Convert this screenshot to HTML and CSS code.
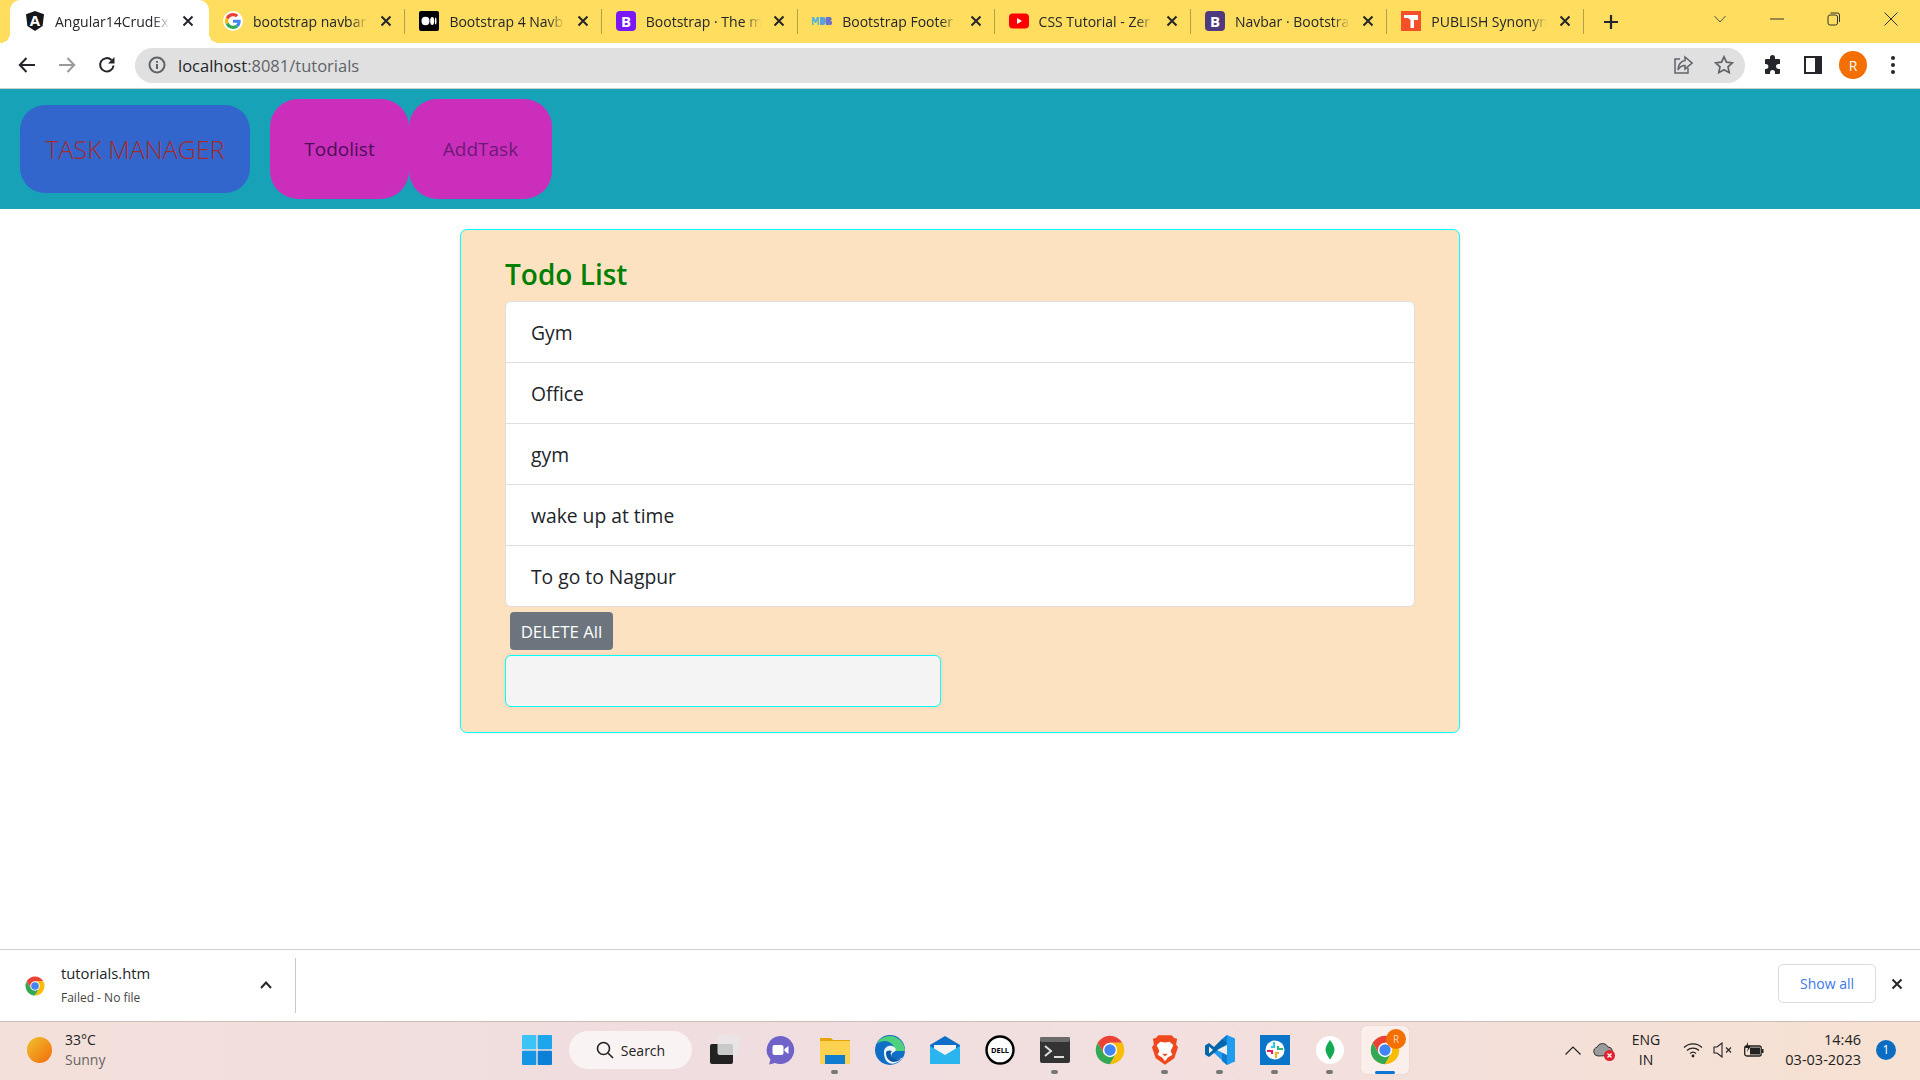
FILE: index.html
```html
<!DOCTYPE html>
<html lang="en">
<head>
    <meta charset="UTF-8">
    <title>Angular14CrudExample</title>
    <link rel="stylesheet" href="styles.css">
</head>
<body>
    <svg class="defs" width="0" height="0">
        <symbol id="chrome" viewBox="3 3 42 42">
            <path fill="#ea4335" d="M41.32 14A20 20 0 0 0 6.68 14L15.34 29 24 24V14Z"/>
            <path fill="#34a853" d="M6.68 14A20 20 0 0 0 24 44L32.66 29 24 24 15.34 29Z"/>
            <path fill="#fbbc05" d="M24 44A20 20 0 0 0 41.32 14H24V24L32.66 29Z"/>
            <circle cx="24" cy="24" r="10" fill="#fff"/>
            <circle cx="24" cy="24" r="8" fill="#4285f4"/>
        </symbol>
        <symbol id="close" viewBox="0 0 12 12">
            <path d="M1.5 1.5l9 9M10.5 1.5l-9 9" fill="none" stroke="#24262b" stroke-width="2"/>
        </symbol>
    </svg>

    <div class="tabstrip">
        <div class="tab active">
            <svg class="fav" viewBox="0 0 20 20"><path d="M10 0l9 3.2-1.4 11.9L10 20l-7.6-4.900L1 3.200z" fill="#15171c"/><text x="10" y="15" class="fav-letter">A</text></svg>
            <span class="tab-title">Angular14CrudExa</span>
            <svg class="tab-close"><use href="#close"/></svg>
        </div>
        <div class="tab">
            <svg class="fav" viewBox="-6 -6 60 60"><circle cx="24" cy="24" r="30" fill="#fff"/><path fill="#ea4335" d="M24 9.500c3.540 0 6.710 1.220 9.210 3.600l6.850-6.850C35.900 2.380 30.470 0 24 0 14.620 0 6.510 5.380 2.560 13.220l7.980 6.190C12.430 13.720 17.740 9.500 24 9.500z"/><path fill="#4285f4" d="M46.980 24.550c0-1.570-.15-3.090-.38-4.550H24v9.020h12.940c-.58 2.960-2.260 5.480-4.780 7.180l7.730 6c4.510-4.180 7.090-10.360 7.090-17.650z"/><path fill="#fbbc05" d="M10.530 28.590c-.48-1.450-.76-2.990-.76-4.590s.27-3.140.76-4.590l-7.980-6.190C.92 16.460 0 20.120 0 24c0 3.880.92 7.540 2.560 10.780l7.970-6.190z"/><path fill="#34a853" d="M24 48c6.480 0 11.930-2.130 15.890-5.810l-7.730-6c-2.150 1.450-4.920 2.300-8.160 2.300-6.260 0-11.570-4.220-13.470-9.910l-7.980 6.190C6.510 42.620 14.620 48 24 48z"/></svg>
            <span class="tab-title">bootstrap navbar</span>
            <svg class="tab-close"><use href="#close"/></svg>
        </div>
        <div class="tab">
            <svg class="fav" viewBox="0 0 20 20"><rect width="20" height="20" rx="2" fill="#000"/><ellipse cx="6.500" cy="10" rx="4" ry="4.200" fill="#fff"/><ellipse cx="13.200" cy="10" rx="2" ry="3.900" fill="#fff"/><ellipse cx="16.700" cy="10" rx=".8" ry="3.500" fill="#fff"/></svg>
            <span class="tab-title">Bootstrap 4 Navb</span>
            <svg class="tab-close"><use href="#close"/></svg>
        </div>
        <div class="tab">
            <svg class="fav" viewBox="0 0 20 20"><rect width="20" height="20" rx="4" fill="#7a17f5"/><text x="10" y="15.500" class="fav-letter">B</text></svg>
            <span class="tab-title">Bootstrap · The m</span>
            <svg class="tab-close"><use href="#close"/></svg>
        </div>
        <div class="tab">
            <svg class="fav" viewBox="0 0 20 20"><path d="M0 6h2l1.500 3L5 6h2v8H5.500V9L4 12H3L1.500 9v5H0z" fill="#52b6dc"/><path d="M8 6h3a3 4 0 0 1 0 8H8z" fill="#5e9fd8"/><path d="M14 6h3.500a2 2 0 0 1 1 3.800 2 2 0 0 1-1 4.200H14z" fill="#6d73c4"/></svg>
            <span class="tab-title">Bootstrap Footer</span>
            <svg class="tab-close"><use href="#close"/></svg>
        </div>
        <div class="tab">
            <svg class="fav" viewBox="0 0 20 20"><rect y="2.500" width="20" height="15" rx="4" fill="#f00"/><path d="M8 7l5 3-5 3z" fill="#fff"/></svg>
            <span class="tab-title">CSS Tutorial - Zer</span>
            <svg class="tab-close"><use href="#close"/></svg>
        </div>
        <div class="tab">
            <svg class="fav" viewBox="0 0 20 20"><rect width="20" height="20" rx="4" fill="#4f3a7e"/><text x="10" y="15.500" class="fav-letter">B</text></svg>
            <span class="tab-title">Navbar · Bootstra</span>
            <svg class="tab-close"><use href="#close"/></svg>
        </div>
        <div class="tab">
            <svg class="fav" viewBox="0 0 20 20"><rect width="20" height="20" fill="#f4502a"/><path d="M3 4h14v5h-4v8H9.500V9L7 7H3z" fill="#fff"/></svg>
            <span class="tab-title">PUBLISH Synonyn</span>
            <svg class="tab-close"><use href="#close"/></svg>
        </div>
        <svg class="new-tab" viewBox="0 0 16 16"><path d="M8 1v14M1 8h14" stroke="#24262b" stroke-width="2.200"/></svg>
        <div class="window-btns">
            <svg class="win-chevron" viewBox="0 0 12 8"><path d="M.5 1l5.500 6 5.500-6" fill="none" stroke="#555"/></svg>
            <svg class="win-btn" viewBox="0 0 14 14"><path d="M0 7h14" stroke="#333"/></svg>
            <svg class="win-btn" viewBox="0 0 14 14"><rect x="1" y="3" width="9.500" height="10" rx="2" fill="none" stroke="#333"/><path d="M3.500 1h7a2 2 0 0 1 2 2v7" fill="none" stroke="#333"/></svg>
            <svg class="win-btn" viewBox="0 0 14 14"><path d="M.5.5l13 13M13.500.5l-13 13" stroke="#333"/></svg>
        </div>
    </div>

    <div class="toolbar">
        <span class="tool"><svg viewBox="0 0 18 18" width="18" height="18"><path d="M17 9H2M8.500 2L1.800 9l6.700 7" fill="none" stroke="#24262b" stroke-width="2"/></svg></span>
        <span class="tool"><svg viewBox="0 0 18 18" width="18" height="18"><path d="M1 9h15M9.500 2l6.700 7-6.700 7" fill="none" stroke="#9a9a9a" stroke-width="2"/></svg></span>
        <span class="tool"><svg viewBox="0 0 18 18" width="18" height="18"><path d="M15.500 9.500A6.700 6.700 0 1 1 13.500 4" fill="none" stroke="#24262b" stroke-width="2"/><path d="M16.500 1v6.500H10z" fill="#24262b"/></svg></span>
        <div class="address">
            <svg class="addr-info" viewBox="0 0 18 18"><circle cx="9" cy="9" r="7.500" fill="none" stroke="#5f6368" stroke-width="2"/><path d="M9 8v5M9 5v1.800" stroke="#5f6368" stroke-width="2"/></svg>
            <span class="url">localhost<span class="url-path">:8081/tutorials</span></span>
            <div class="addr-tools">
                <span class="addr-tool"><svg viewBox="0 0 20 20" width="20" height="20"><path d="M7 4H2v14h13v-5" fill="none" stroke="#5f6368" stroke-width="1.500"/><path d="M12 2l7 6-7 6v-3.500C9 10.500 6.500 12 5 15c0-5 3-9 7-9.500z" fill="none" stroke="#5f6368" stroke-width="1.500"/></svg></span>
                <span class="addr-tool"><svg viewBox="0 0 20 20" width="20" height="20"><path d="M10 1.800l2.500 5.400 5.900.7-4.400 4 1.200 5.800-5.200-2.900-5.200 2.900L6 11.900l-4.400-4 5.900-.7z" fill="none" stroke="#5f6368" stroke-width="1.700"/></svg></span>
            </div>
        </div>
        <div class="toolbar-end">
            <span class="tool"><svg viewBox="0 0 20 20" width="20" height="20"><path d="M7 2.500a2.500 2.500 0 0 1 5 0V4h4a1 1 0 0 1 1 1v4h-1.500a2.500 2.500 0 0 0 0 5H17v4a1 1 0 0 1-1 1h-4v-1.500a2.500 2.500 0 0 0-5 0V19H3a1 1 0 0 1-1-1v-4h1a2.500 2.500 0 0 0 0-5H2V5a1 1 0 0 1 1-1h4z" fill="#24262b"/></svg></span>
            <span class="tool"><svg viewBox="0 0 18 18" width="18" height="18"><rect x="1" y="1" width="16" height="16" fill="none" stroke="#24262b" stroke-width="2"/><rect x="11" y="1" width="6" height="16" fill="#24262b"/></svg></span>
            <span class="tool"><span class="avatar">R</span></span>
            <span class="tool"><svg viewBox="0 0 6 20" width="6" height="20"><circle cx="3" cy="3" r="2" fill="#24262b"/><circle cx="3" cy="10" r="2" fill="#24262b"/><circle cx="3" cy="17" r="2" fill="#24262b"/></svg></span>
        </div>
    </div>

    <nav class="navbar">
        <a class="brand">TASK MANAGER</a>
        <a class="nav-link link-todo">Todolist</a>
        <a class="nav-link link-add">AddTask</a>
    </nav>

    <main class="content">
        <section class="todo-card">
            <h3 class="todo-title">Todo List</h3>
            <ul class="todo-list">
                <li>Gym</li>
                <li>Office</li>
                <li>gym</li>
                <li>wake up at time</li>
                <li>To go to Nagpur</li>
            </ul>
            <button class="delete-btn">DELETE All</button>
            <input class="todo-input" type="text">
        </section>
    </main>

    <div class="download-bar">
        <div class="download-item">
            <svg class="dl-icon"><use href="#chrome"/></svg>
            <div class="dl-text">
                <span class="dl-name">tutorials.htm</span>
                <span class="dl-status">Failed - No file</span>
            </div>
            <svg class="dl-chevron" viewBox="0 0 12 8"><path d="M1 7l5-5.500L11 7" fill="none" stroke="#24262b" stroke-width="2"/></svg>
        </div>
        <button class="show-all">Show all</button>
        <svg class="dl-close"><use href="#close"/></svg>
    </div>

    <footer class="taskbar">
        <div class="weather">
            <span class="sun"></span>
            <div class="weather-text">
                <span class="temp">33°C</span>
                <span class="sky">Sunny</span>
            </div>
        </div>
        <div class="task-icons">
            <span class="task-item task-start"><svg viewBox="0 0 30 30" width="30" height="30"><rect width="14.300" height="14.300" rx="1" fill="#3cc4f7"/><rect x="15.700" width="14.300" height="14.300" rx="1" fill="#1ea6ec"/><rect y="15.700" width="14.300" height="14.300" rx="1" fill="#1596e4"/><rect x="15.700" y="15.700" width="14.300" height="14.300" rx="1" fill="#0c7fd6"/></svg></span>
            <div class="search-pill">
                <svg viewBox="0 0 18 18" width="18" height="18"><circle cx="7.500" cy="7.500" r="6" fill="none" stroke="#222" stroke-width="1.600"/><path d="M12 12l5 5" stroke="#222" stroke-width="1.600"/></svg>
                <span>Search</span>
            </div>
            <span class="task-item"><svg viewBox="0 0 30 30" width="30" height="30"><rect y="9" width="23" height="20" rx="2" fill="#222"/><rect x="7.500" width="22" height="20" rx="2" fill="#e8e6e6" fill-opacity=".85"/></svg></span>
            <span class="task-item"><svg viewBox="0 0 30 30" width="30" height="30"><path d="M15 1a14 14 0 1 1-5 27l-6 1.500 1.500-5A14 14 0 0 1 15 1z" fill="#6f62c9"/><rect x="7.500" y="10" width="11" height="10" rx="2" fill="#fff"/><path d="M19.500 14l4-3v8l-4-3z" fill="#fff"/></svg></span>
            <span class="task-item dot"><svg viewBox="0 0 30 28" width="30" height="28"><path d="M0 2h11l2 2h17v24H0z" fill="#e5a50a"/><rect y="5" width="30" height="23" fill="#fcd250"/><path d="M5 19h20v9H5z" fill="#0f7ccf"/></svg></span>
            <span class="task-item"><svg viewBox="0 0 30 30" width="30" height="30"><circle cx="15" cy="15" r="15" fill="#0f6fc6"/><path d="M30 16C30 8 23 1 15 1 9 1 4 4 2 9c4-4 11-4 15 0 3 3 2 7 0 7z" fill="#4ed07c"/><path d="M9 17c0-4 4-7 8-6s5 5 2 6c-3 1-4 5 0 7 3 1 7 0 9-2-3 5-9 8-14 6-4-2-5-7-5-11z" fill="#fff" fill-opacity=".92"/><path d="M11 18c0 5 3 8 7 9 3 0 6-1 8-3-4 1-9 0-10-4-1-2 1-4 1-4-2-1-6-1-6 2z" fill="#0c59a4"/></svg></span>
            <span class="task-item"><svg viewBox="0 0 30 28" width="30" height="28"><path d="M0 9L15 0l15 9v19H0z" fill="#0f6fc6"/><path d="M4 9h22v6l-11 6-11-6z" fill="#f2f2f2"/><path d="M0 10l15 9 15-9v18H0z" fill="#2bb5ee"/></svg></span>
            <span class="task-item"><svg viewBox="0 0 30 30" width="30" height="30"><circle cx="15" cy="15" r="13.500" fill="#fff" stroke="#000" stroke-width="2.400"/><text x="15" y="18" class="dell-text">DELL</text></svg></span>
            <span class="task-item dot"><svg viewBox="0 0 30 26" width="30" height="26"><rect width="30" height="26" rx="2" fill="#333"/><rect width="30" height="5" rx="2" fill="#6b6b6b"/><path d="M5 9l6 5-6 5" fill="none" stroke="#ddd" stroke-width="2"/><path d="M14 20h10" stroke="#ddd" stroke-width="2"/></svg></span>
            <span class="task-item"><svg width="30" height="30"><use href="#chrome"/></svg></span>
            <span class="task-item dot"><svg viewBox="0 0 28 32" width="26" height="30"><path d="M7 0h14l3 3 3 1-1 6 2 3-4 12-10 7-10-7L0 13l2-3-1-6 3-1z" fill="#f1491f"/><path d="M14 8l-5-1-4 4 3 6-2 4 5 3 3 4 3-4 5-3-2-4 3-6-4-4z" fill="#fff"/><path d="M11 20h6l-3 3z" fill="#f1491f"/></svg></span>
            <span class="task-item dot"><svg viewBox="0 0 30 30" width="30" height="30"><path d="M22 0l8 3.500v23L22 30 7 16z" fill="#1f9cf0"/><path d="M22 0v30l-5-4V4z" fill="#0f7ccf"/><path d="M22 8L9 18l-5 4-4-2.500V10.500L4 8l5 4 8-8z" fill="#0065a9"/><path d="M4 11.500v7l4-3.500z" fill="#f0ece8"/><path d="M22 10L12 15l10 5z" fill="#f0ece8"/></svg></span>
            <span class="task-item dot"><svg viewBox="0 0 30 30" width="30" height="30"><rect width="30" height="30" fill="#0a74c9"/><circle cx="15" cy="15" r="9.500" fill="#fff"/><path d="M14 7v5h-3" fill="none" stroke="#36c5f0" stroke-width="2.200"/><path d="M23 14h-5v-3" fill="none" stroke="#2eb67d" stroke-width="2.200"/><path d="M16 23v-5h3" fill="none" stroke="#ecb22e" stroke-width="2.200"/><path d="M7 16h5v3" fill="none" stroke="#e01e5a" stroke-width="2.200"/></svg></span>
            <span class="task-item dot"><svg viewBox="0 0 30 30" width="30" height="30"><circle cx="15" cy="15" r="14" fill="#fff"/><path d="M15 5c3 4 4.500 7 4.500 10S17 21 15.500 24h-1C13 21 10.500 18 10.500 15S12 9 15 5z" fill="#13aa52"/></svg></span>
            <span class="task-item active-task">
                <svg width="30" height="30"><use href="#chrome"/></svg>
                <span class="task-badge">R</span>
            </span>
        </div>
        <div class="tray">
            <svg class="tray-chevron" viewBox="0 0 16 9"><path d="M.5 8.500L8 1l7.500 7.500" fill="none" stroke="#222" stroke-width="1.200"/></svg>
            <span class="tray-cloud">
                <svg viewBox="0 0 20 18" width="20" height="18"><path d="M5 15a4.500 4.500 0 0 1-1-8.800A6 6 0 0 1 15 6a4.500 4.500 0 0 1 2 8.500z" fill="#9b9b9b" stroke="#333"/></svg>
                <span class="cloud-x"><svg viewBox="0 0 11 11" width="11" height="11"><path d="M3.500 3.500l4 4M7.500 3.500l-4 4" stroke="#fff" stroke-width="1.300"/></svg></span>
            </span>
            <div class="lang"><span>ENG</span><span>IN</span></div>
            <svg class="tray-wifi" viewBox="0 0 20 16"><path d="M1 5.500a13 13 0 0 1 18 0M4 8.500a9 9 0 0 1 12 0M7 11.500a4.500 4.500 0 0 1 6 0" fill="none" stroke="#222" stroke-width="1.200"/><circle cx="10" cy="14" r="1.400" fill="#222"/></svg>
            <svg class="tray-sound" viewBox="0 0 20 16"><path d="M1 5h3l5-4v14l-5-4H1z" fill="none" stroke="#222" stroke-width="1.100"/><path d="M13 5.500l5 5M18 5.500l-5 5" stroke="#222" stroke-width="1.100"/></svg>
            <svg class="tray-battery" viewBox="0 0 20 16"><rect x=".7" y="4" width="16.500" height="10" rx="2" fill="none" stroke="#222" stroke-width="1.300"/><rect x="6" y="5.500" width="10" height="7" fill="#222"/><rect x="17.500" y="7" width="2" height="4" fill="#222"/><path d="M4 0L1 6h3L3 10l4-6H4z" fill="#222"/></svg>
            <div class="clock"><span>14:46</span><span>03-03-2023</span></div>
            <span class="notif">1</span>
        </div>
    </footer>
</body>
</html>
```

FILE: styles.css
```css
* {
    box-sizing: border-box;
}

html, body {
    margin: 0;
    height: 100%;
}

body {
    width: 1920px;
    height: 1080px;
    overflow: hidden;
    display: flex;
    flex-direction: column;
    font-family: "Open Sans", "Noto Sans", sans-serif;
    background: #fff;
    color: #212529;
}

.defs {
    position: absolute;
}

svg {
    flex-shrink: 0;
    display: block;
}

/* browser tabs */
.tabstrip {
    height: 43px;
    flex-shrink: 0;
    display: flex;
    align-items: center;
    padding-left: 10px;
    background: #ffdd5e;
}

.tab {
    position: relative;
    width: 196.4px;
    height: 43px;
    padding: 0 13px 1px 14px;
    display: flex;
    align-items: center;
    gap: 12px;
    font-size: 14px;
    color: #24262b;
}

.tab::after {
    content: "";
    position: absolute;
    right: 0;
    top: 9px;
    height: 25px;
    width: 1px;
    background: #b59f4c;
}

.tab.active {
    width: 199px;
    padding-left: 15px;
    padding-right: 15px;
    background: #fff;
    border-radius: 10px 10px 0 0;
}

/* curved feet of the active tab */
.tab.active::before,
.tab.active::after {
    content: "";
    position: absolute;
    top: auto;
    bottom: 0;
    width: 10px;
    height: 10px;
    background: radial-gradient(circle at 0 0, transparent 10px, #fff 10px);
}

.tab.active::before {
    left: -10px;
}

.tab.active::after {
    right: -10px;
    background: radial-gradient(circle at 100% 0, transparent 10px, #fff 10px);
}

.fav {
    width: 20px;
    height: 20px;
    margin-right: -2px;
}

.fav-letter {
    font-size: 15px;
    font-weight: 700;
    fill: #fff;
    text-anchor: middle;
}

.tab-title {
    flex: 1;
    min-width: 0;
    white-space: nowrap;
    -webkit-mask-image: linear-gradient(to right, #000 85%, transparent 100%);
    mask-image: linear-gradient(to right, #000 85%, transparent 100%);
}

.tab-close {
    width: 12px;
    height: 12px;
}

.new-tab {
    width: 16px;
    height: 16px;
    margin-left: 19px;
}

.window-btns {
    margin-left: auto;
    display: flex;
    align-items: center;
    height: 37px;
    align-self: flex-start;
}

.win-chevron {
    width: 12px;
    height: 8px;
    margin-right: 44px;
}

.win-btn {
    width: 14px;
    height: 14px;
    margin-right: 43px;
}

.win-btn:last-child {
    margin-right: 22px;
}

/* address row */
.toolbar {
    height: 46px;
    flex-shrink: 0;
    display: flex;
    align-items: center;
    padding: 0 7px 1px;
    background: #fff;
    border-bottom: 1px solid #cfcfcf;
}

.tool {
    width: 40px;
    height: 40px;
    display: flex;
    align-items: center;
    justify-content: center;
}

.address {
    width: 1610px;
    height: 35px;
    margin-left: 8px;
    padding: 0 1px 0 13px;
    display: flex;
    align-items: center;
    background: #e0e0e0;
    border-radius: 18px;
}

.addr-info {
    width: 18px;
    height: 18px;
    margin-right: 12px;
}

.url {
    font-size: 16.500px;
    color: #24262b;
}

.url-path {
    color: #5f6368;
}

.addr-tools {
    margin-left: auto;
    display: flex;
}

.addr-tool {
    width: 41px;
    display: flex;
    justify-content: center;
}

.toolbar-end {
    display: flex;
    margin-left: 8px;
}

.avatar {
    width: 28px;
    height: 28px;
    border-radius: 50%;
    background: #f26f00;
    color: #fff;
    font-size: 14px;
    display: flex;
    align-items: center;
    justify-content: center;
}

/* page nav */
.navbar {
    height: 120px;
    flex-shrink: 0;
    display: flex;
    align-items: center;
    padding-left: 20px;
    background: #17a2b8;
}

.brand {
    width: 230px;
    height: 88px;
    margin-right: 20px;
    display: flex;
    align-items: center;
    justify-content: center;
    background: #3366cc;
    border-radius: 25px;
    color: #a52a2a;
    font-size: 25px;
    font-weight: 300;
}

.nav-link {
    height: 100px;
    display: flex;
    align-items: center;
    justify-content: center;
    background: #cc2ebc;
    border-radius: 28px;
    font-size: 19px;
}

.link-todo {
    width: 139px;
    color: #4b0f57;
}

.link-add {
    width: 143px;
    color: #6c1a78;
}

/* todo card */
.content {
    flex: 1;
    padding-top: 20px;
    display: flex;
    justify-content: center;
    align-items: flex-start;
}

.todo-card {
    width: 1000px;
    padding: 0 44px 25px;
    background: #fde2c2;
    border: 1.500px solid #00ffff;
    border-radius: 7px;
    box-shadow: 0 0 4px rgba(0, 0, 0, 0.08);
}

.todo-title {
    height: 71px;
    margin: 0;
    padding-top: 23px;
    color: #008000;
    font-size: 28px;
    font-weight: 600;
    line-height: 42px;
}

.todo-list {
    list-style: none;
    margin: 0;
    padding: 0;
    background: #fff;
    border: 1px solid #dfdfe2;
    border-radius: 6px;
}

.todo-list li {
    height: 61px;
    padding: 1px 0 0 25px;
    display: flex;
    align-items: center;
    font-size: 19.300px;
    border-bottom: 1px solid #dfdfe2;
}

.todo-list li:last-child {
    height: 60px;
    border-bottom: 0;
}

.delete-btn {
    display: block;
    width: 103px;
    height: 38px;
    margin: 5px 0 5px 5px;
    padding: 0;
    border: 0;
    border-radius: 4px;
    background: #6c757d;
    color: #fff;
    font-family: inherit;
    font-size: 16.800px;
}

.todo-input {
    display: block;
    width: 436px;
    height: 52px;
    background: #f4f4f4;
    border: 1.500px solid #00ffff;
    border-radius: 6px;
    box-shadow: 0 0 4px rgba(0, 0, 0, 0.08);
}

/* downloads shelf */
.download-bar {
    height: 72px;
    flex-shrink: 0;
    display: flex;
    align-items: center;
    padding-right: 17px;
    background: #fff;
    border-top: 1px solid #cfcfcf;
}

.download-item {
    width: 296px;
    height: 55px;
    padding-left: 25px;
    display: flex;
    align-items: center;
    border-right: 1px solid #c8c8c8;
}

.dl-icon {
    width: 20px;
    height: 20px;
    margin-right: 16px;
}

.dl-text {
    display: flex;
    flex-direction: column;
    gap: 5px;
    flex: 1;
}

.dl-name {
    font-size: 14.800px;
    line-height: 20px;
}

.dl-status {
    font-size: 12px;
    line-height: 20px;
    color: #444;
}

.dl-chevron {
    width: 12px;
    height: 8px;
    margin: 0 23px 2px 0;
}

.show-all {
    width: 98px;
    height: 39px;
    margin: 0 0 4px auto;
    background: #fff;
    border: 1px solid #dadce0;
    border-radius: 5px;
    color: #3c78e8;
    font-family: inherit;
    font-size: 14px;
}

.dl-close {
    width: 12px;
    height: 12px;
    margin: 0 0 4px 15px;
}

/* windows taskbar */
.taskbar {
    height: 59px;
    flex-shrink: 0;
    display: flex;
    align-items: center;
    padding-bottom: 2px;
    background: linear-gradient(to right, #f4e0da, #efdde0 35%, #f2dfdf 60%, #f6e1d2);
    border-top: 1px solid #cdbdb8;
}

.weather {
    width: 510px;
    padding-left: 27px;
    display: flex;
    align-items: center;
    gap: 13px;
}

.sun {
    width: 25px;
    height: 26px;
    border-radius: 50%;
    background: linear-gradient(135deg, #f2c12e, #f06d0a);
}

.weather-text {
    display: flex;
    flex-direction: column;
    font-size: 14px;
    line-height: 20px;
}

.temp {
    color: #222;
}

.sky {
    color: #666;
}

.task-icons {
    display: flex;
    align-items: center;
    height: 58px;
}

.task-item {
    position: relative;
    width: 55px;
    height: 58px;
    display: flex;
    align-items: center;
    justify-content: center;
}

.task-start {
    width: 54px;
}

.dot::after {
    content: "";
    position: absolute;
    bottom: 5px;
    left: 24px;
    width: 7px;
    height: 4px;
    border-radius: 2px;
    background: #777;
}

.search-pill {
    width: 123px;
    height: 38px;
    margin: 0 5px;
    display: flex;
    align-items: center;
    justify-content: center;
    gap: 7px;
    background: #f9f3f3;
    border-radius: 19px;
    font-size: 14px;
    color: #222;
    flex-shrink: 0;
}

.dell-text {
    font-size: 7.500px;
    font-weight: 700;
    text-anchor: middle;
}

.active-task {
    width: 48px;
    height: 48px;
    margin-left: 4px;
    background: #faefea;
    border-radius: 5px;
    box-shadow: 0 0 1px rgba(0, 0, 0, 0.2);
}

.active-task::after {
    content: "";
    position: absolute;
    bottom: 0;
    left: 14px;
    width: 20px;
    height: 3px;
    border-radius: 2px;
    background: #0a78d4;
}

.task-badge {
    position: absolute;
    top: 3px;
    right: 3px;
    width: 20px;
    height: 20px;
    border-radius: 50%;
    background: #f26f00;
    color: #f8d8b8;
    font-size: 10px;
    line-height: 20px;
    text-align: center;
}

.tray {
    margin-left: auto;
    display: flex;
    align-items: center;
    padding-right: 24px;
    font-size: 14px;
    color: #222;
}

.tray-chevron {
    width: 16px;
    height: 9px;
    margin-right: 12px;
}

.tray-cloud {
    position: relative;
    width: 20px;
    margin-right: 15px;
}

.cloud-x {
    position: absolute;
    right: -2px;
    bottom: -2px;
    width: 11px;
    height: 11px;
    border-radius: 50%;
    background: #e02030;
}

.lang {
    display: flex;
    flex-direction: column;
    align-items: center;
    line-height: 20px;
    width: 36px;
    margin-right: 19px;
}

.tray-wifi, .tray-sound, .tray-battery {
    width: 20px;
    height: 16px;
    margin-right: 11px;
}

.tray-wifi {
    margin-right: 10px;
}

.clock {
    display: flex;
    flex-direction: column;
    align-items: flex-end;
    line-height: 20px;
    font-size: 14.500px;
    white-space: nowrap;
    width: 78px;
    margin-left: 8px;
    margin-right: 15px;
}

.notif {
    width: 20px;
    height: 20px;
    border-radius: 50%;
    background: #0a6cc2;
    color: #fff;
    font-size: 12px;
    line-height: 20px;
    text-align: center;
}
```
